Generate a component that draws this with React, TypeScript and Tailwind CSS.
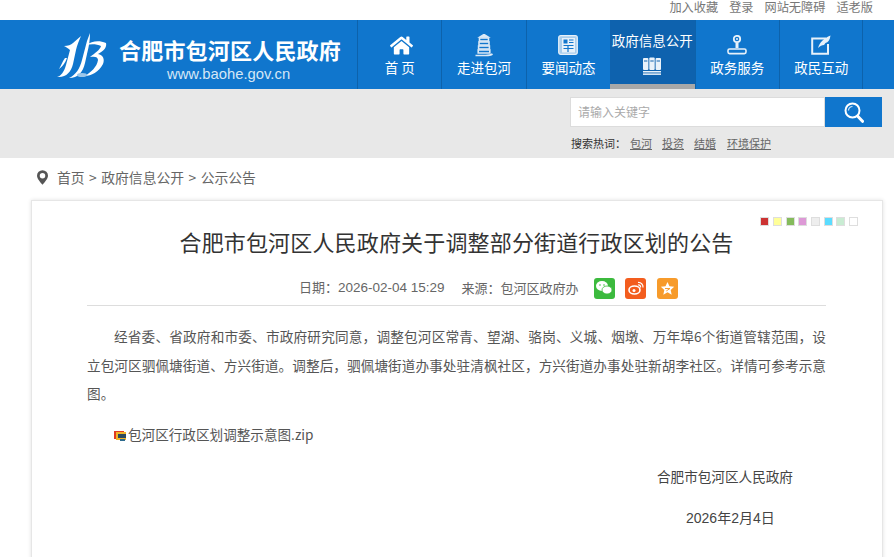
import { FaHome } from "react-icons/fa";

const font = { fontFamily: '"Noto Sans CJK SC", "Liberation Sans", sans-serif' };
const latin = { fontFamily: '"Liberation Sans", "Noto Sans CJK SC", sans-serif' };

function Tower() {
  return (
    <svg width="18" height="23" viewBox="0 0 18 23" fill="none" stroke="#dbe9f6" strokeWidth="1.6">
      <path d="M9 0.5 L13 3 H5 Z" fill="#dbe9f6" />
      <rect x="4.5" y="4" width="9" height="3" />
      <rect x="4" y="8" width="10" height="3" />
      <rect x="3.6" y="12" width="10.8" height="3" />
      <path d="M3.2 16 h11.6 v3 h-11.6 z" />
      <path d="M0.5 21.5 h10 q5 0 7 -1.5" />
    </svg>
  );
}
function News() {
  return (
    <svg width="20" height="20" viewBox="0 0 20 20">
      <rect x="0.7" y="0.7" width="18.6" height="18.6" rx="2" fill="#a9cdec" stroke="#e7f1fa" strokeWidth="1.2" />
      <rect x="4" y="3" width="13" height="14.5" fill="#e7f1fa" />
      <rect x="5.5" y="4.5" width="4" height="4" fill="#1076cd" />
      <path d="M11 5h4.5M11 7.5h4.5M5.5 10.5h10M10 11v6M5.5 13.5h10" stroke="#1076cd" strokeWidth="1.2" />
    </svg>
  );
}
function Books() {
  return (
    <svg width="18" height="18" viewBox="0 0 18 18" fill="#e9f2fa">
      <rect x="0" y="1" width="5.4" height="12" rx="1" />
      <rect x="6.3" y="0.5" width="5.4" height="12.5" rx="1" />
      <rect x="12.6" y="1" width="5.4" height="12" rx="1" />
      <rect x="0" y="14" width="18" height="1.5" />
      <rect x="0" y="16.4" width="18" height="1.5" />
      <path d="M1 4h3.4M7.3 4h3.4M13.6 4h3.4" stroke="#1265ae" strokeWidth="1" />
    </svg>
  );
}
function Stamp() {
  return (
    <svg width="20" height="20" viewBox="0 0 20 20" fill="none" stroke="#e7f1fa">
      <circle cx="10" cy="4" r="3.2" strokeWidth="1.8" />
      <circle cx="10" cy="4" r="1" fill="#e7f1fa" stroke="none" />
      <path d="M10 7.5 V13" strokeWidth="3" />
      <rect x="1" y="14" width="18" height="4.6" rx="1.6" strokeWidth="1.6" fill="#1076cd" />
    </svg>
  );
}
function Edit() {
  return (
    <svg width="20" height="20" viewBox="0 0 20 20" fill="none">
      <path d="M15 3.5 H1.2 V18.8 H17 V9" stroke="#e7f1fa" strokeWidth="2" />
      <path d="M7 13 C9 7 13 3 19.5 0.5 C19 5 17 7.5 14.5 8 L13 10 C11 10 9 11 7 13 Z" fill="#e7f1fa" />
    </svg>
  );
}
function Logo() {
  return (
    <svg width="50" height="47" viewBox="0 0 50 47" fill="#fff">
      <path d="M0 45 C4 44 7 40 9 33 L13 18 C11 16 9 15 7 14 C11 14 14 13 16 11 L24 4 C22 9 20 13 19 18 L16 32 C14 40 9 46 0 45 Z" />
      <path d="M12 46 C19 43 23 36 25 28 L30 9 L33 1 C33 8 32 14 30 22 L28 31 C26 40 21 46 12 46 Z" />
      <path d="M8 26 C5 30 4 34 2 37 C6 34 8 31 10 26 Z" />
      <path d="M29 13 C35 9 42 8 49 11 C50 15 47 19 41 22 C46 23 48 27 46 32 C42 40 34 44 28 44 C34 40 40 35 41 28 C41 25 38 24 33 25 C38 21 43 18 44 14 C40 12 34 12 29 13 Z" />
      <ellipse cx="25" cy="43" rx="5" ry="2" fill="#9cc7ea" />
    </svg>
  );
}
function Magnifier() {
  return (
    <svg width="20" height="21" viewBox="0 0 20 21" fill="none" stroke="#fff">
      <circle cx="8.500" cy="8.500" r="7" strokeWidth="2" />
      <path d="M4.500 8.500 a4 4 0 0 1 4 -4" strokeWidth="1.200" stroke="#cfe4f6" />
      <path d="M13.500 14 L18.500 19.300" strokeWidth="3" strokeLinecap="round" />
    </svg>
  );
}

const nav = [
  { label: "首 页", icon: <FaHome size={23} color="#fff" className="ml-[3px]" /> },
  { label: "走进包河", icon: <Tower /> },
  { label: "要闻动态", icon: <News /> },
  { label: "政府信息公开", icon: <Books />, active: true },
  { label: "政务服务", icon: <Stamp /> },
  { label: "政民互动", icon: <Edit /> },
];

const swatches = ["bg-[#cc3333]", "bg-[#ffff99]", "bg-[#85bb5c]", "bg-[#dd99d6]", "bg-[#eeeeee]", "bg-[#5bdcff]", "bg-[#c9ecd3]", "bg-white"];

export default function App() {
  return (
    <div className="w-[894px] h-[557px] overflow-hidden bg-white text-[#555]" style={font}>
      <div className="h-5 pb-[6px] flex items-center justify-end pr-[21px] gap-[11px] text-[12.2px] leading-[14px] text-[#777]">
        <span>加入收藏</span>
        <span>登录</span>
        <span>网站无障碍</span>
        <span>适老版</span>
      </div>

      <div className="h-[69px] bg-[#1076cd] flex">
        <div className="w-[357px] shrink-0 flex pl-[57px]">
          <div className="w-[62px] pt-[12px]"><Logo /></div>
          <div className="flex flex-col pt-[13px]">
            <div className="text-white leading-[32px] text-[22px] font-bold tracking-[0.2px] whitespace-nowrap">合肥市包河区人民政府</div>
            <div className="pl-[48px] text-[#d5e7f6] text-[14.8px] leading-[18px]" style={latin}>www.baohe.gov.cn</div>
          </div>
        </div>
        {nav.map((n) =>
          n.active ? (
            <div key={n.label} className="w-[84.400px] bg-[#0e62ae] flex flex-col items-center text-white border-b-[5px] border-[#a8a8a8]">
              <span className="text-[13.500px] leading-[18px] mt-[11px] whitespace-nowrap">{n.label}</span>
              <span className="mt-[8px]"><Books /></span>
            </div>
          ) : (
            <div key={n.label} className="w-[84.400px] border-l border-[#0d62ab] last:border-r flex flex-col items-center text-white">
              <span className="h-[24px] mt-[13px] flex items-center justify-center">{n.icon}</span>
              <span className="text-[13.500px] leading-[18px] mt-[1px] whitespace-nowrap">{n.label}</span>
            </div>
          )
        )}
      </div>

      <div className="h-[69px] bg-[#e8e8e8] pl-[570px] pt-[8px]">
        <div className="flex w-[312px] h-[30px]">
          <div className="w-[255px] bg-white border border-[#dcdcdc] flex items-center pl-[7px] text-xs text-[#aaa]">请输入关键字</div>
          <div className="w-[57px] bg-[#1076cd] flex items-center justify-center">
            <Magnifier />
          </div>
        </div>
        <div className="flex mt-[7px] text-[11px] leading-[18px] text-[#333]">
          <span className="mr-[4px] ml-px">搜索热词：</span>
          <span className="underline text-[#666] mr-[10px]">包河</span>
          <span className="underline text-[#666] mr-[10px]">投资</span>
          <span className="underline text-[#666] mr-[11px]">结婚</span>
          <span className="underline text-[#666]">环境保护</span>
        </div>
      </div>

      <div className="h-[39px] flex items-center pl-[37px] text-[13.800px] text-[#666]">
        <svg width="11" height="15" viewBox="0 0 12 16" className="mr-[9px]">
          <path fillRule="evenodd" d="M6 0a6 6 0 0 1 6 6c0 3-3.500 7-6 10C3.500 13 0 9 0 6a6 6 0 0 1 6-6Zm0 3a3 3 0 1 0 0 6 3 3 0 0 0 0-6Z" fill="#555" />
        </svg>
        <span>首页</span><span className="mx-[4.500px]">&gt;</span>
        <span>政府信息公开</span><span className="mx-[4.500px]">&gt;</span>
        <span>公示公告</span>
      </div>

      <div className="mt-[3px] ml-[31px] w-[852px] h-[400px] border border-[#e6e6e6] shadow-[0_0_4px_rgba(0,0,0,0.12)] pl-[55px] pr-[56px]">
        <div className="flex justify-end gap-[3.700px] mt-[16px] mr-[-32px] h-[9px]">
          {swatches.map((c) => (
            <span key={c} className={`w-[9px] h-[9px] border border-[#dedede] ${c}`} />
          ))}
        </div>
        <h1 className="text-[22px] leading-[30px] tracking-[0.16px] font-normal text-[#333] text-center">合肥市包河区人民政府关于调整部分街道行政区划的公告</h1>
        <div className="flex items-center h-[22px] mt-[21px] pl-[212px] text-[13px] text-[#666]">
          <span>日期：<span className="text-[13.500px]" style={latin}>2026-02-04 15:29</span></span>
          <span className="ml-[17px]">来源：包河区政府办</span>
          <span className="ml-[15px] w-[21px] h-[21px] rounded-[3px] bg-[#3cba3e] flex items-center justify-center">
            <svg width="16" height="14" viewBox="0 0 16 14" fill="#fff">
              <ellipse cx="6" cy="5" rx="6" ry="5" />
              <ellipse cx="11" cy="9" rx="5" ry="4" stroke="#3cba3e" strokeWidth="0.8" />
              <circle cx="4" cy="4" r="0.8" fill="#3cba3e" /><circle cx="8" cy="4" r="0.8" fill="#3cba3e" />
            </svg>
          </span>
          <span className="ml-[10.500px] w-[21px] h-[21px] rounded-[3px] bg-[#f35d1e] flex items-center justify-center">
            <svg width="16" height="14" viewBox="0 0 16 14" fill="none" stroke="#fff" strokeWidth="1.6">
              <ellipse cx="6.500" cy="9" rx="5.500" ry="4" />
              <circle cx="6" cy="9.500" r="1.500" fill="#fff" stroke="none" />
              <path d="M10 1.500 a4.500 4.500 0 0 1 5 5 M10 4 a2 2 0 0 1 2.500 2.500" strokeWidth="1.200" />
            </svg>
          </span>
          <span className="ml-[10.500px] w-[21px] h-[21px] rounded-[3px] bg-[#f79b2b] flex items-center justify-center">
            <svg width="15" height="15" viewBox="0 0 24 24" fill="#fff">
              <path d="M12 1.500l3.200 7 7.500.8-5.600 5.100 1.600 7.500L12 18l-6.700 3.900 1.600-7.500-5.600-5.100 7.500-.8z" />
              <path d="M8 12h8l-6 4" stroke="#f79b2b" strokeWidth="1.500" fill="none" />
            </svg>
          </span>
        </div>
        <div className="border-t border-[#dddddd] mt-[6px]" />
        <p className="mt-[16px] text-[13.650px] leading-[28.500px] text-[#555] text-justify indent-[27px]">
          经省委、省政府和市委、市政府研究同意，调整包河区常青、望湖、骆岗、义城、烟墩、万年埠6个街道管辖范围，设立包河区驷佩塘街道、方兴街道。调整后，驷佩塘街道办事处驻清枫社区，方兴街道办事处驻新胡李社区。详情可参考示意图。
        </p>
        <div className="mt-[13px] flex items-center h-[28px] pl-[27px] text-[13.600px] text-[#555]">
          <svg width="14" height="14" viewBox="0 0 14 14">
            <rect x="0" y="3" width="10" height="8" fill="#e03a22" />
            <rect x="2" y="4" width="10" height="8" fill="#f0b429" />
            <rect x="4" y="6" width="8" height="4" fill="#2d4a5e" />
            <rect x="6" y="11" width="5" height="2" fill="#2d6a8e" />
          </svg>
          <span>包河区行政区划调整示意图.zip</span>
        </div>
        <p className="mt-[13px] pl-[570px] text-[13.600px] leading-[28px] text-[#444] whitespace-nowrap">合肥市包河区人民政府</p>
        <p className="mt-[14px] pl-[599px] text-[14px] leading-[28px] text-[#444] whitespace-nowrap" style={latin}>2026年2月4日</p>
      </div>
    </div>
  );
}
